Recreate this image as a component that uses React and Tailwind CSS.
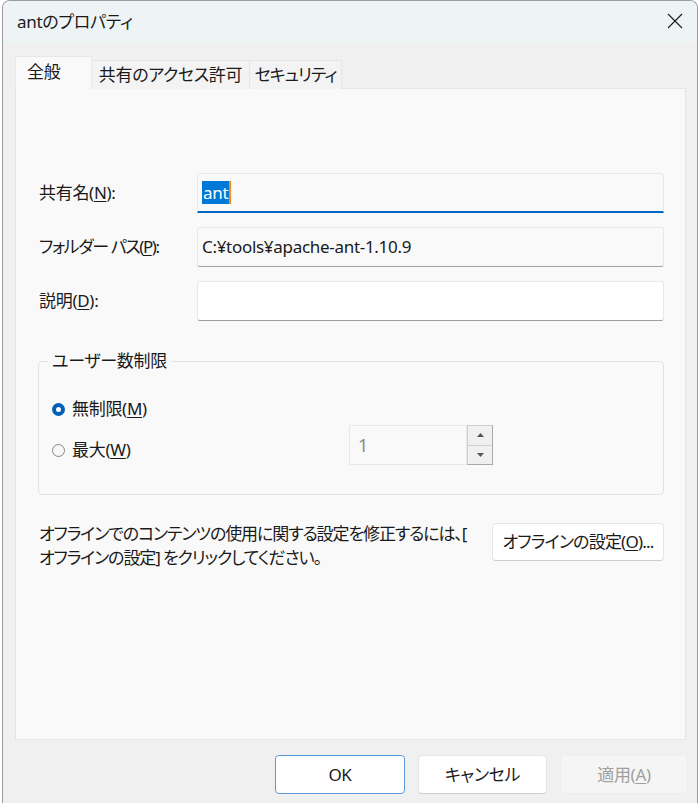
import React from "react";

const font = "[font-family:'Noto_Sans','Noto_Sans_CJK_JP',sans-serif] [font-feature-settings:'palt'] tracking-[-0.3px]";

const Key = ({ children }) => <span className="underline underline-offset-[2px]">{children}</span>;

const Field = ({ label, children }) => (
	<div className="flex h-[40px] items-center">
		<div className="w-[158px] shrink-0 text-[17px] text-[#1a1a1a]">{label}</div>
		{children}
	</div>
);

const Radio = ({ checked, children }) => (
	<div className="flex h-[24px] items-center gap-[7px] text-[17px] text-[#1a1a1a]">
		{checked ? (
			<span className="flex h-[13px] w-[13px] items-center justify-center rounded-full bg-[#005fb8]">
				<span className="h-[5px] w-[5px] rounded-full bg-white" />
			</span>
		) : (
			<span className="h-[13px] w-[13px] rounded-full border border-[#8a8a8a] bg-[#f7f7f7]" />
		)}
		<span>{children}</span>
	</div>
);

const Spinner = () => (
	<div className="flex h-[40px] w-[144px]">
		<div className="flex flex-1 items-center border border-[#e8e8e8] bg-[#f9f9f9] pl-[8px] text-[18px] text-[#8a8a8a]">1</div>
		<div className="flex w-[26px] flex-col">
			<div className="flex flex-1 items-center justify-center border border-[#cfcfcf] border-r-[#a8a8a8] bg-[#f0f0f0]">
				<svg width="7" height="4" viewBox="0 0 7 4">
					<path d="M0 4 L3.5 0 L7 4 Z" fill="#555" />
				</svg>
			</div>
			<div className="flex flex-1 items-center justify-center border border-t-0 border-[#cfcfcf] border-r-[#a8a8a8] border-b-[#a8a8a8] bg-[#f0f0f0]">
				<svg width="7" height="4" viewBox="0 0 7 4">
					<path d="M0 0 L7 0 L3.5 4 Z" fill="#555" />
				</svg>
			</div>
		</div>
	</div>
);

export default function App() {
	return (
		<div className={`h-[803px] w-[700px] overflow-hidden bg-white ${font}`}>
			<div className="mx-[2px] flex h-[803px] flex-col overflow-hidden rounded-t-[8px] border-x border-t border-[#9c9c9c] bg-[#f0f0f0]">
				{/* title bar */}
				<div className="flex h-[42px] items-center justify-between bg-[#eef3f6] pl-[14px] pr-[14px]">
					<span className="text-[17px] text-[#1a1a1a]">antのプロパティ</span>
					<svg width="16" height="16" viewBox="0 0 16 16" className="mt-[-2px]">
						<path d="M1 1 L15 15 M15 1 L1 15" stroke="#1a1a1a" strokeWidth="1.1" fill="none" />
					</svg>
				</div>

				{/* tabs */}
				<div className="relative z-10 mb-[-1px] ml-[12px] mt-[13px] flex items-end text-[17px] text-[#1a1a1a]">
					<div className="flex h-[33px] w-[77px] items-center border border-b-0 border-[#e8e8e8] bg-[#f9f9f9] pl-[11px] pb-[2px]">全般</div>
					<div className="flex h-[29px] w-[158px] items-center justify-center border border-b-0 border-l-0 border-[#e6e6e6] bg-[#f3f3f3]">共有のアクセス許可</div>
					<div className="flex h-[29px] w-[92px] items-center justify-center border border-b-0 border-l-0 border-[#e6e6e6] bg-[#f3f3f3] tracking-[-1px]">セキュリティ</div>
				</div>

				{/* panel */}
				<div className="ml-[12px] flex h-[652px] w-[671px] flex-col border border-[#e5e5e5] bg-[#f9f9f9] pl-[23px] pr-[21px] pt-[84px]">
					<div className="flex flex-col gap-[14px]">
						<Field
							label={
								<>
									共有名(<Key>N</Key>):
								</>
							}
						>
							<div className="flex h-full flex-1 items-center rounded-t-[3px] border border-[#e8e8e8] border-b-2 border-b-[#0067c0] bg-[#f9f9f9] pl-[4px]">
								<span className="flex h-[23px] items-center bg-[#0078d7] px-[1px] text-[17px] text-white">ant</span>
								<span className="h-[23px] w-[2px] bg-[#f08a24]" />
							</div>
						</Field>
						<Field
							label={
								<span className="tracking-[-1.4px]">
									フォルダー パス(<Key>P</Key>):
								</span>
							}
						>
							<div className="flex h-full flex-1 items-center rounded-[3px] border border-[#e8e8e8] border-b-[#a0a0a0] bg-[#f9f9f9] pl-[4px] text-[17px] text-[#1a1a1a]">
								C:¥tools¥apache-ant-1.10.9
							</div>
						</Field>
						<Field
							label={
								<>
									説明(<Key>D</Key>):
								</>
							}
						>
							<div className="h-full flex-1 rounded-[3px] border border-[#e8e8e8] border-b-[#a0a0a0] bg-white" />
						</Field>
					</div>

					<fieldset className="ml-[-1px] mt-[28px] h-[146px] rounded-[4px] border border-[#e2e2e2] pl-[13px]">
						<legend className="ml-[-4px] px-[4px] text-[17px] leading-[24px] text-[#1a1a1a]">ユーザー数制限</legend>
						<div className="mt-[24px]">
							<Radio checked>
								無制限(<Key>M</Key>)
							</Radio>
						</div>
						<div className="mt-[4px] flex h-[40px] items-start">
							<div className="mt-[13px] w-[297px]">
								<Radio>
									最大(<Key>W</Key>)
								</Radio>
							</div>
							<Spinner />
						</div>
					</fieldset>

					<div className="mt-[27px] flex items-start justify-between">
						<p className="whitespace-nowrap text-[17px] leading-[24px] tracking-[-1.1px] text-[#1a1a1a]">
							オフラインでのコンテンツの使用に関する設定を修正するには、[
							<br />
							オフラインの設定] をクリックしてください。
						</p>
						<button className="mt-[1px] flex h-[38px] w-[172px] shrink-0 items-center justify-center rounded-[4px] border border-[#e5e5e5] border-b-[#cccccc] bg-white text-[17px] tracking-[-0.8px] text-[#1a1a1a]">
							オフラインの設定(<Key>O</Key>)...
						</button>
					</div>
				</div>

				{/* footer */}
				<div className="mt-[15px] flex justify-end gap-[13px] pr-[9px]">
					<button className="flex h-[39px] w-[130px] items-center justify-center rounded-[4px] border border-[#5a9ad8] bg-white text-[17px] text-[#1a1a1a]">
						OK
					</button>
					<button className="flex h-[39px] w-[129px] items-center justify-center rounded-[4px] border border-[#e5e5e5] border-b-[#cccccc] bg-white text-[17px] text-[#1a1a1a]">
						キャンセル
					</button>
					<button className="flex h-[39px] w-[128px] items-center justify-center rounded-[4px] border border-[#ededed] bg-[#f5f5f5] text-[17px] text-[#a0a0a0]">
						適用(<Key>A</Key>)
					</button>
				</div>
			</div>
		</div>
	);
}
